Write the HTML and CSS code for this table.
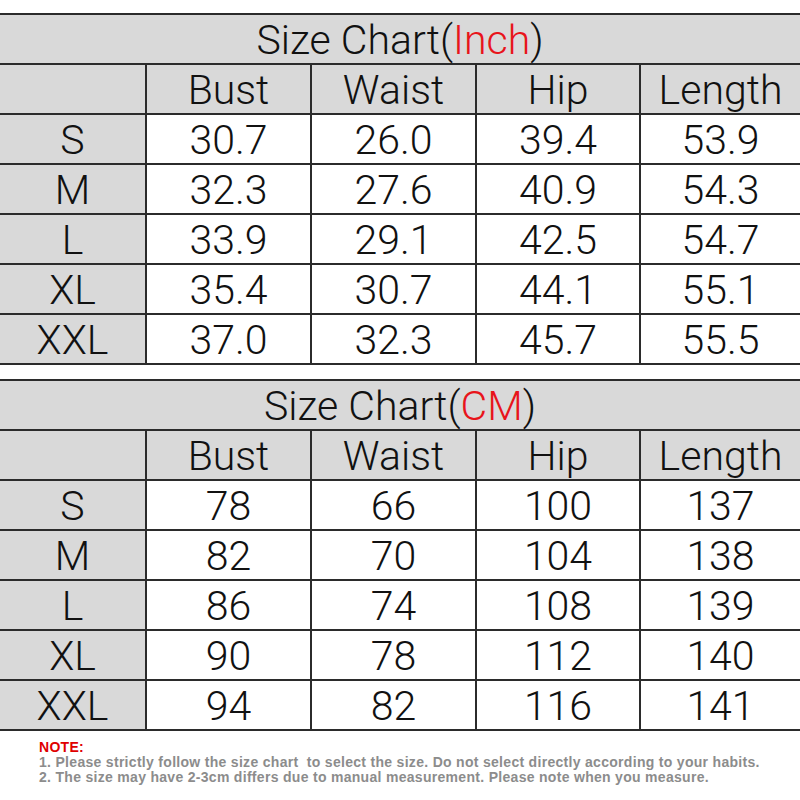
FILE: index.html
```html
<!DOCTYPE html>
<html>
<head>
<meta charset="utf-8">
<link rel="stylesheet" href="styles.css">
</head>
<body>
<div class="page">
  <section class="chart">
    <div class="title">Size Chart(<span class="unit">Inch</span>)</div>
    <div class="side"></div><div class="head">Bust</div><div class="head">Waist</div><div class="head">Hip</div><div class="head">Length</div>
    <div class="side">S</div><div class="cell">30.7</div><div class="cell">26.0</div><div class="cell">39.4</div><div class="cell">53.9</div>
    <div class="side">M</div><div class="cell">32.3</div><div class="cell">27.6</div><div class="cell">40.9</div><div class="cell">54.3</div>
    <div class="side">L</div><div class="cell">33.9</div><div class="cell">29.1</div><div class="cell">42.5</div><div class="cell">54.7</div>
    <div class="side">XL</div><div class="cell">35.4</div><div class="cell">30.7</div><div class="cell">44.1</div><div class="cell">55.1</div>
    <div class="side">XXL</div><div class="cell">37.0</div><div class="cell">32.3</div><div class="cell">45.7</div><div class="cell">55.5</div>
  </section>
  <section class="chart">
    <div class="title">Size Chart(<span class="unit">CM</span>)</div>
    <div class="side"></div><div class="head">Bust</div><div class="head">Waist</div><div class="head">Hip</div><div class="head">Length</div>
    <div class="side">S</div><div class="cell">78</div><div class="cell">66</div><div class="cell">100</div><div class="cell">137</div>
    <div class="side">M</div><div class="cell">82</div><div class="cell">70</div><div class="cell">104</div><div class="cell">138</div>
    <div class="side">L</div><div class="cell">86</div><div class="cell">74</div><div class="cell">108</div><div class="cell">139</div>
    <div class="side">XL</div><div class="cell">90</div><div class="cell">78</div><div class="cell">112</div><div class="cell">140</div>
    <div class="side">XXL</div><div class="cell">94</div><div class="cell">82</div><div class="cell">116</div><div class="cell">141</div>
  </section>
  <div class="note">
    <div class="note-title">NOTE:</div>
    <div class="note-line">1. Please strictly follow the size chart&nbsp; to select the size. Do not select directly according to your habits.</div>
    <div class="note-line">2. The size may have 2-3cm differs due to manual measurement. Please note when you measure.</div>
  </div>
</div>
</body>
</html>
```

FILE: styles.css
```css
html, body {
  margin: 0;
  padding: 0;
  background: #ffffff;
}

.page {
  width: 800px;
  height: 800px;
  padding-top: 13px;
  box-sizing: border-box;
  display: flex;
  flex-direction: column;
  gap: 14px;
  overflow: hidden;
}

.chart {
  display: grid;
  grid-template-columns: 145px 163px 163px 162px 1fr;
  grid-auto-rows: 48px;
  gap: 2px;
  background: #2b2b2b;
  border-top: 2px solid #2b2b2b;
  border-bottom: 2px solid #2b2b2b;
  font-family: Roboto, "Liberation Sans", sans-serif;
  font-weight: 300;
  color: #111;
}

.chart > div {
  display: flex;
  align-items: center;
  justify-content: center;
  font-size: 41px;
  line-height: 1;
  padding-top: 2px;
  box-sizing: border-box;
}

.title {
  grid-column: 1 / -1;
  background: #d9d9d9;
}

.unit {
  color: #e8141b;
}

.side, .head {
  background: #d9d9d9;
}

.cell {
  background: #ffffff;
}

.note {
  padding-left: 39px;
  margin-top: -5px;
  font-family: "Liberation Sans", Arial, sans-serif;
  font-weight: bold;
  font-size: 14px;
  line-height: 15px;
  letter-spacing: 0.3px;
  color: #8c8c8c;
}

.note-title {
  color: #e00000;
  font-size: 14px;
}
```
